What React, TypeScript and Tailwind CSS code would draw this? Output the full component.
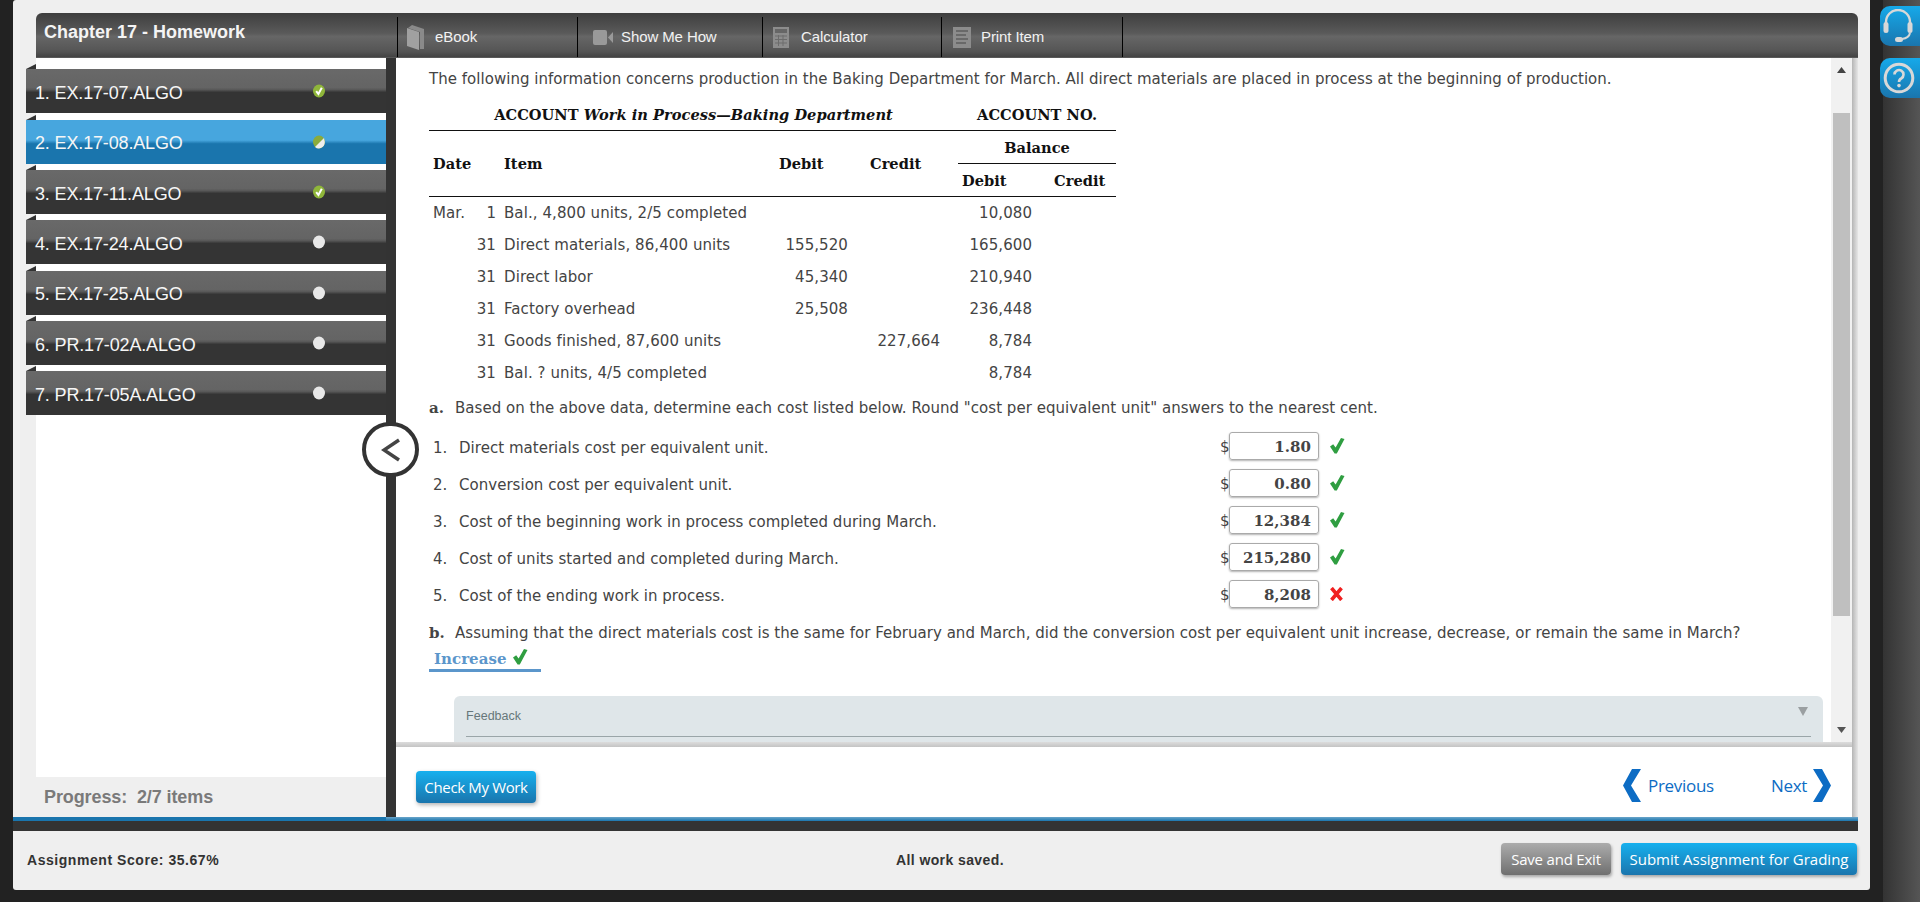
import React from "react";

const items = [
  { t: "1. EX.17-07.ALGO", s: "done" },
  { t: "2. EX.17-08.ALGO", s: "part", active: true },
  { t: "3. EX.17-11.ALGO", s: "done" },
  { t: "4. EX.17-24.ALGO", s: "none" },
  { t: "5. EX.17-25.ALGO", s: "none" },
  { t: "6. PR.17-02A.ALGO", s: "none" },
  { t: "7. PR.17-05A.ALGO", s: "none" },
];

const rows = [
  ["Mar.", "1", "Bal., 4,800 units, 2/5 completed", "", "", "10,080"],
  ["", "31", "Direct materials, 86,400 units", "155,520", "", "165,600"],
  ["", "31", "Direct labor", "45,340", "", "210,940"],
  ["", "31", "Factory overhead", "25,508", "", "236,448"],
  ["", "31", "Goods finished, 87,600 units", "", "227,664", "8,784"],
  ["", "31", "Bal. ? units, 4/5 completed", "", "", "8,784"],
];

const questions = [
  ["1.", "Direct materials cost per equivalent unit.", "1.80", true],
  ["2.", "Conversion cost per equivalent unit.", "0.80", true],
  ["3.", "Cost of the beginning work in process completed during March.", "12,384", true],
  ["4.", "Cost of units started and completed during March.", "215,280", true],
  ["5.", "Cost of the ending work in process.", "8,208", false],
] as const;

function Dot({ s }: { s: string }) {
  if (s === "none")
    return (
      <svg width="12" height="14" viewBox="0 0 12 14">
        <ellipse cx="6" cy="7" rx="6" ry="6.5" fill="#e8e8e8" />
      </svg>
    );
  if (s === "part")
    return (
      <svg width="12" height="14" viewBox="0 0 12 14">
        <ellipse cx="6" cy="7" rx="6" ry="6.5" fill="#8aab3c" />
        <path d="M11 3 L11.8 7 A6 6.5 0 0 1 2 12 Z" fill="#eeeeee" />
      </svg>
    );
  return (
    <svg width="12" height="14" viewBox="0 0 12 14">
      <ellipse cx="6" cy="7" rx="6" ry="6.5" fill="#8fb63a" />
      <path d="M3.2 7.2 L5.4 10 L8.8 3.8" fill="none" stroke="#fff" strokeWidth="2" />
    </svg>
  );
}

function Check({ className = "" }: { className?: string }) {
  return (
    <svg className={className} width="15" height="16" viewBox="0 0 15 16">
      <path d="M0 8.5 L3.2 6.2 L5.6 9.4 L11 0 L14.5 1 L6.8 15.5 L4.6 15.5 Z" fill="#2f9e41" />
    </svg>
  );
}

function Cross() {
  return (
    <svg width="13" height="14" viewBox="0 0 13 14">
      <path d="M1.5 1 L11.5 13 M11.5 1 L1.5 13" stroke="#f01f1f" strokeWidth="3.6" fill="none" />
    </svg>
  );
}

function Tab({ w, icon, label }: { w: string; icon: React.ReactNode; label: string }) {
  return (
    <div className={`${w} mt-[4px] h-[40px] border-l border-black flex items-center`}>
      {icon}
      <span className="text-[15px] tracking-[-0.1px] text-[#f2f2f2]">{label}</span>
    </div>
  );
}

export default function App() {
  return (
    <div className="w-[1920px] h-[902px] flex bg-[#222] overflow-hidden font-['Liberation_Sans',sans-serif]">
      <div className="ml-[13px] w-[1857px] h-[890px] bg-[#efefef] rounded-b-[3px] rounded-tl-[3px] flex flex-col pt-[13px]">
        {/* Header */}
        <div className="ml-[23px] w-[1822px] h-[45px] rounded-t-[6px] flex bg-[linear-gradient(180deg,#3e3e3e_0%,#5a5a5a_45%,#666_52%,#555_85%,#444_97%,#666_100%)]">
          <div className="w-[361px] pl-[8px] pt-[8px] text-[18px] leading-[22px] font-bold text-[#f4f4f4]">
            Chapter 17 - Homework
          </div>
          <Tab
            w="w-[180px]"
            label="eBook"
            icon={
              <svg className="ml-[9px] mr-[10px]" width="18" height="25" viewBox="0 0 18 25">
                <path d="M1 3 L5 0 L17 4 L17 24 L13 24 L13 7 L1 3Z" fill="#8a8a8a" />
                <path d="M0 3 L12 7 L12 25 L0 21 Z" fill="#a0a0a0" />
              </svg>
            }
          />
          <Tab
            w="w-[185px]"
            label="Show Me How"
            icon={
              <svg className="ml-[15px] mr-[8px]" width="20" height="15" viewBox="0 0 20 15">
                <rect x="0" y="0" width="14" height="15" rx="2" fill="#999" />
                <path d="M15 7.5 L20 2 L20 13 Z" fill="#999" />
              </svg>
            }
          />
          <Tab
            w="w-[179px]"
            label="Calculator"
            icon={
              <svg className="ml-[10px] mr-[12px]" width="16" height="21" viewBox="0 0 16 21">
                <rect width="16" height="21" fill="#8c8c8c" />
                <rect x="2" y="2" width="12" height="4" fill="#666" />
                <path d="M2 9H14M2 12.5H14M2 16H14M5.5 8V19M10 8V19" stroke="#6c6c6c" strokeWidth="1" />
              </svg>
            }
          />
          <Tab
            w="w-[181px]"
            label="Print Item"
            icon={
              <svg className="ml-[11px] mr-[10px]" width="18" height="21" viewBox="0 0 18 21">
                <rect width="18" height="21" fill="#8c8c8c" />
                <path d="M3 4H15M3 8H13M3 12H15M3 16H13" stroke="#5e5e5e" strokeWidth="1.6" />
              </svg>
            }
          />
          <div className="mt-[4px] h-[40px] border-l border-black" />
        </div>

        {/* Body */}
        <div className="flex h-[759px]">
          {/* Sidebar */}
          <aside className="w-[373px] flex flex-col">
            <div className="ml-[23px] h-[719px] bg-white">
              <div className="-ml-[10px] pt-[11.4px] flex flex-col gap-[6.33px]">
                {items.map((it) => (
                  <div
                    key={it.t}
                    className={`relative h-[44px] flex items-center pl-[9px] ${
                      it.active
                        ? "bg-[linear-gradient(180deg,#47a6de_0%,#47a6de_46%,#1a75ad_54%,#1a75ad_100%)]"
                        : "bg-[linear-gradient(180deg,#696969_0%,#646464_42%,#585858_47%,#343434_53%,#343434_100%)]"
                    }`}
                  >
                    <svg className="absolute left-0 -top-[5px]" width="10" height="5" viewBox="0 0 10 5">
                      <path d="M0 5 L10 0 L10 5 Z" fill="#333" />
                    </svg>
                    <span className="mt-[4px] text-[18px] tracking-[-0.15px] text-[#f6f6f6]">{it.t}</span>
                    <span className="absolute left-[287px] top-[15px] flex">
                      <Dot s={it.s} />
                    </span>
                  </div>
                ))}
              </div>
            </div>
            <div className="h-[40px] pl-[31px] flex items-center text-[18px] tracking-[-0.1px] font-bold text-[#7a7a7a] whitespace-pre">
              Progress:  2/7 items
            </div>
          </aside>

          {/* Divider */}
          <div className="relative w-[10px] bg-[#333]">
            <div className="absolute -left-[24px] top-[364px] w-[57px] h-[55px] rounded-full border-[4px] border-[#333] bg-white flex items-center justify-center">
              <svg width="20" height="24" viewBox="0 0 20 24">
                <path d="M18 2 L3 12 L18 22" fill="none" stroke="#444" strokeWidth="3.5" />
              </svg>
            </div>
          </div>

          {/* Main */}
          <main className="w-[1456px] flex flex-col bg-white">
            <div className="h-[684px] flex overflow-hidden">
              <div className="w-[1435px] pl-[33px] pt-[11px] text-[15px] tracking-[0.03px] leading-[20px] text-[#444] font-['DejaVu_Sans',sans-serif]">
                <p className="whitespace-nowrap">
                  The following information concerns production in the Baking Department for March. All direct
                  materials are placed in process at the beginning of production.
                </p>
                <table className="mt-[11px] w-[687px] table-fixed text-[#444]">
                  <colgroup>
                    <col className="w-[71px]" />
                    <col className="w-[268px]" />
                    <col className="w-[90px]" />
                    <col className="w-[100px]" />
                    <col className="w-[84px]" />
                    <col className="w-[74px]" />
                  </colgroup>
                  <thead className="font-['DejaVu_Serif',serif] font-bold text-[14.6px] text-[#111]">
                    <tr className="h-[30px] border-b border-[#111]">
                      <th colSpan={4} className="font-bold text-center">
                        ACCOUNT <em>Work in Process—Baking Department</em>
                      </th>
                      <th colSpan={2} className="font-bold text-center">ACCOUNT NO.</th>
                    </tr>
                    <tr className="h-[33px]">
                      <th rowSpan={2} className="font-bold text-left pl-[4px] pt-[2px]">Date</th>
                      <th rowSpan={2} className="font-bold text-left pl-[4px] pt-[2px]">Item</th>
                      <th rowSpan={2} className="font-bold text-left pl-[11px] pt-[2px]">Debit</th>
                      <th rowSpan={2} className="font-bold text-left pl-[12px] pt-[2px]">Credit</th>
                      <th colSpan={2} className="font-bold text-center border-b border-[#111] pt-[2px]">Balance</th>
                    </tr>
                    <tr className="h-[33px] border-b border-[#111]">
                      <th className="font-bold text-left pl-[4px] pt-[2px]">Debit</th>
                      <th className="font-bold text-left pl-[12px] pt-[2px]">Credit</th>
                    </tr>
                  </thead>
                  <tbody className="tracking-[0.08px]">
                    {rows.map((r, i) => (
                      <tr key={i} className="h-[32px]">
                        <td className="px-[4px] pt-[2px]">
                          <div className="flex justify-between">
                            <span>{r[0]}</span>
                            <span>{r[1]}</span>
                          </div>
                        </td>
                        <td className="pl-[4px] pt-[2px] whitespace-nowrap">{r[2]}</td>
                        <td className="pr-[10px] pt-[2px] text-right">{r[3]}</td>
                        <td className="pr-[18px] pt-[2px] text-right">{r[4]}</td>
                        <td className="pr-[10px] pt-[2px] text-right">{r[5]}</td>
                        <td />
                      </tr>
                    ))}
                  </tbody>
                </table>

                <p className="mt-[10px] flex whitespace-nowrap">
                  <b className="w-[26px] font-['DejaVu_Serif',serif]">a.</b>
                  <span>
                    Based on the above data, determine each cost listed below. Round "cost per equivalent unit" answers
                    to the nearest cent.
                  </span>
                </p>

                <div className="mt-[11px]">
                  {questions.map(([n, q, v, ok]) => (
                    <div key={n} className="h-[37px] flex pl-[4px]">
                      <span className="w-[26px] self-center">{n}</span>
                      <span className="w-[761px] self-center">{q}</span>
                      <span className="w-[9px] mt-[8px]">$</span>
                      <div className="mt-[3px] w-[90px] h-[28px] pt-[1px] rounded-[3px] border border-[#aaa] shadow-[0_1px_2px_rgba(0,0,0,0.3)] flex items-center justify-end pr-[7px] font-['DejaVu_Serif',serif] font-bold text-[15px]">
                        {v}
                      </div>
                      <span className={ok ? "ml-[11px] mt-[9px]" : "ml-[11px] mt-[10px]"}>{ok ? <Check /> : <Cross />}</span>
                    </div>
                  ))}
                </div>

                <p className="mt-[9px] flex whitespace-nowrap">
                  <b className="w-[26px] font-['DejaVu_Serif',serif]">b.</b>
                  <span>
                    Assuming that the direct materials cost is the same for February and March, did the conversion cost
                    per equivalent unit increase, decrease, or remain the same in March?
                  </span>
                </p>
                <div className="mt-[4px] w-[112px] h-[25px] pl-[5px] pt-[2px] border-b-[3px] border-[#5b96cb] flex items-center gap-[7px] font-['DejaVu_Serif',serif] font-bold text-[#5b96cb]">
                  Increase <Check className="-mt-[4px]" />
                </div>

                <div className="mt-[24px] ml-[25px] w-[1369px] h-[60px] rounded-t-[6px] bg-[#dfe6e9] px-[12px]">
                  <div className="h-[41px] border-b border-[#9aa5a8] flex items-center justify-between pr-[3px] font-['Liberation_Sans',sans-serif] text-[12.5px] text-[#66777a]">
                    <span>Feedback</span>
                    <svg className="-mt-[10px]" width="10" height="9" viewBox="0 0 10 9">
                      <path d="M0 0H10L5 9Z" fill="#9a9fa1" />
                    </svg>
                  </div>
                </div>
              </div>

              {/* Scrollbar */}
              <div className="w-[21px] bg-[#f1f1f1] flex flex-col items-center">
                <svg className="mt-[9px]" width="9" height="6" viewBox="0 0 9 6">
                  <path d="M4.5 0L9 6H0Z" fill="#444" />
                </svg>
                <div className="mt-[40px] w-[17px] h-[503px] bg-[#bfbfbf]" />
                <svg className="mt-[111px]" width="9" height="6" viewBox="0 0 9 6">
                  <path d="M0 0H9L4.5 6Z" fill="#555" />
                </svg>
              </div>
            </div>

            {/* Bottom nav */}
            <div className="h-[75px] bg-white flex flex-col">
              <div className="h-[5px] bg-[linear-gradient(180deg,#dcdcdc,#c4c4c4)]" />
              <div className="flex-1 flex items-start justify-between pl-[20px] pr-[21px] font-['Open_Sans',sans-serif]">
                <button className="mt-[24px] w-[120px] h-[32px] rounded-[4px] text-[15px] tracking-[-0.35px] text-white bg-[linear-gradient(180deg,#16b0ee,#1a75ad)] shadow-[1px_2px_4px_rgba(0,0,0,0.3)]">
                  Check My Work
                </button>
                <div className="mt-[22px] flex items-center text-[#0d6cc4] text-[17px] tracking-[-0.3px]">
                  <svg width="18" height="33" viewBox="0 0 18 33">
                    <path d="M18 0 H9 L0 16.5 L9 33 H18 L8 16.5 Z" fill="#0d6cc4" />
                  </svg>
                  <span className="ml-[7px] w-[123px]">Previous</span>
                  <span className="w-[42px]">Next</span>
                  <svg width="18" height="33" viewBox="0 0 18 33">
                    <path d="M0 0 H9 L18 16.5 L9 33 H0 L10 16.5 Z" fill="#0d6cc4" />
                  </svg>
                </div>
              </div>
            </div>
          </main>
          <div className="w-[6px] bg-[linear-gradient(90deg,#b5b5b5,#e6e6e6)]" />
        </div>

        {/* Progress line + dark band */}
        <div className="w-[1845px] h-[4px] flex">
          <div className="w-[373px] bg-[#1a75ad]" />
          <div className="flex-1 bg-[linear-gradient(180deg,#6aa5ca,#1a75ad)]" />
        </div>
        <div className="w-[1845px] h-[10px] bg-[#333]" />

        {/* Footer */}
        <div className="h-[59px] flex items-center pl-[14px] pr-[13px] text-[14px] font-bold text-[#333] tracking-[0.4px]">
          <span className="w-[869px] mt-[-1px] tracking-[0.55px]">Assignment Score: 35.67%</span>
          <span className="flex-1 mt-[-1px]">All work saved.</span>
          <button className="mt-[-3px] w-[110px] h-[32px] rounded-[4px] font-normal font-['Open_Sans',sans-serif] text-[15px] tracking-[-0.2px] text-white bg-[linear-gradient(180deg,#acacac,#6f6f6f)] shadow-[1px_2px_3px_rgba(0,0,0,0.3)]">
            Save and Exit
          </button>
          <button className="mt-[-3px] ml-[10px] w-[236px] h-[32px] rounded-[4px] font-normal font-['Open_Sans',sans-serif] text-[15px] tracking-normal text-white bg-[linear-gradient(180deg,#16b0ee,#1a75ad)] shadow-[1px_2px_3px_rgba(0,0,0,0.3)]">
            Submit Assignment for Grading
          </button>
        </div>
      </div>

      {/* Right rail */}
      <div className="w-[50px] h-[902px] pt-[6px] pl-[10px] flex flex-col gap-[12px] bg-[linear-gradient(90deg,#222_13px,#333_13px,#555_100%)]">
        <div className="w-[40px] h-[40px] rounded-l-[10px] bg-[linear-gradient(180deg,#16a9e9,#1a75ad)] flex items-center justify-start pl-[3px]">
          <svg width="30" height="34" viewBox="0 0 30 34" fill="none">
            <path d="M3 20 V13 A12 12 0 0 1 27 13 V20" stroke="#d8d8d8" strokeWidth="2.4" />
            <rect x="0.5" y="13" width="5" height="11" rx="2.5" fill="#d8d8d8" />
            <rect x="24.5" y="13" width="5" height="11" rx="2.5" fill="#d8d8d8" />
            <path d="M27 24 Q26 29 19 30" stroke="#d8d8d8" strokeWidth="2" />
            <rect x="12" y="28" width="8" height="5" rx="2.5" fill="#d8d8d8" />
          </svg>
        </div>
        <div className="w-[40px] h-[40px] rounded-l-[10px] bg-[linear-gradient(180deg,#16a9e9,#1a75ad)] flex items-center pl-[3px]">
          <svg width="32" height="32" viewBox="0 0 32 32" fill="none">
            <circle cx="16" cy="16" r="13.8" stroke="#d8d8d8" strokeWidth="3" />
            <path d="M11.5 12.5 A4.5 4.5 0 1 1 18.2 16.5 Q16 17.6 16 20" stroke="#d8d8d8" strokeWidth="2.6" />
            <circle cx="16" cy="23.6" r="1.8" fill="#d8d8d8" />
          </svg>
        </div>
      </div>
    </div>
  );
}
